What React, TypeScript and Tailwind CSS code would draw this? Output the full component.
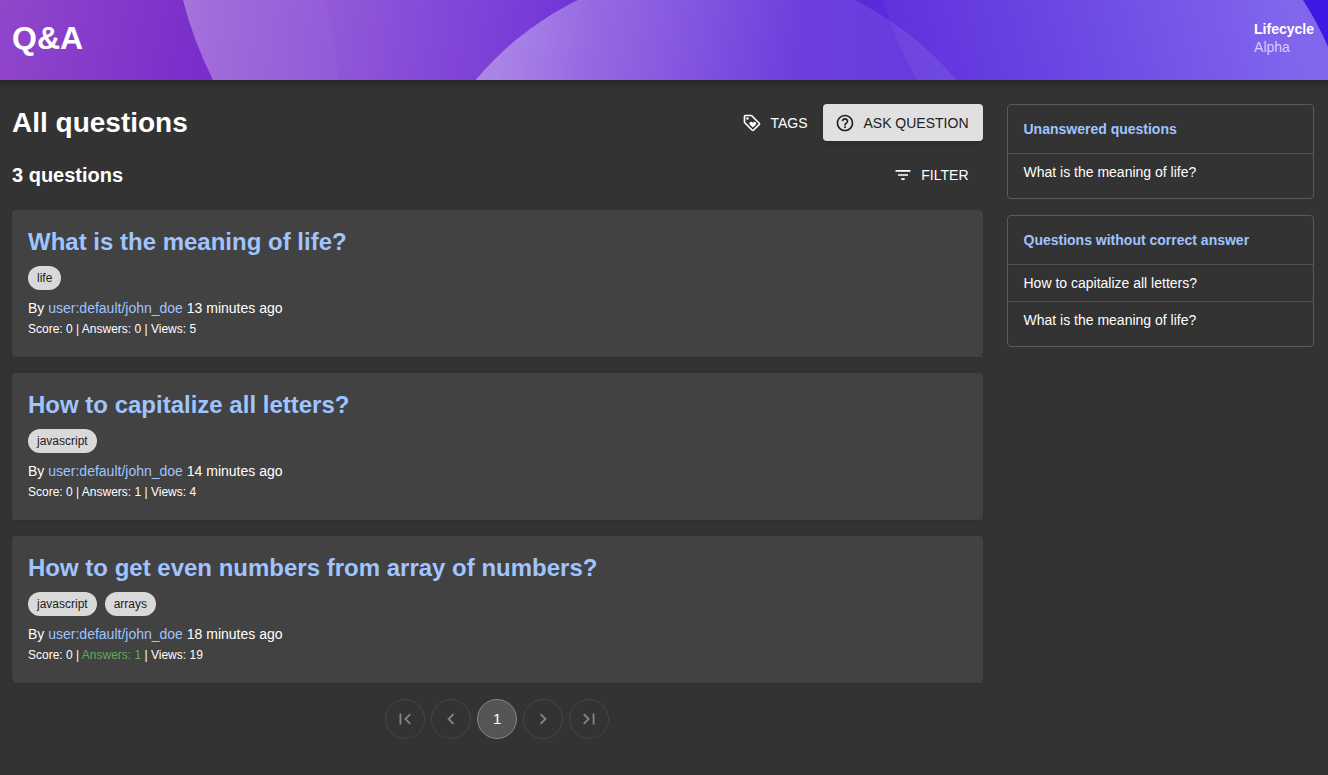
import type { ReactNode } from 'react';
import {
  MdOutlineLoyalty,
  MdHelpOutline,
  MdFilterList,
  MdFirstPage,
  MdNavigateBefore,
  MdNavigateNext,
  MdLastPage,
} from 'react-icons/md';

type Question = {
  title: string;
  tags: string[];
  age: string;
  score: number;
  answers: number;
  views: number;
  solved?: boolean;
};

const questions: Question[] = [
  { title: 'What is the meaning of life?', tags: ['life'], age: '13 minutes ago', score: 0, answers: 0, views: 5 },
  { title: 'How to capitalize all letters?', tags: ['javascript'], age: '14 minutes ago', score: 0, answers: 1, views: 4 },
  {
    title: 'How to get even numbers from array of numbers?',
    tags: ['javascript', 'arrays'],
    age: '18 minutes ago',
    score: 0,
    answers: 1,
    views: 19,
    solved: true,
  },
];

function HeaderShapes() {
  return (
    <svg
      className="absolute inset-0 h-full w-full"
      viewBox="0 0 1328 80"
      preserveAspectRatio="none"
      aria-hidden="true"
    >
      <defs>
        <linearGradient id="base" gradientUnits="userSpaceOnUse" x1="0" y1="0" x2="1328" y2="0">
          <stop offset="0" stopColor="#8737c6" />
          <stop offset="0.16" stopColor="#792dcb" />
          <stop offset="0.4" stopColor="#7132d6" />
          <stop offset="0.66" stopColor="#5a2adb" />
          <stop offset="1" stopColor="#3f17e3" />
        </linearGradient>
        <linearGradient id="fadeA" gradientUnits="userSpaceOnUse" x1="0" y1="0" x2="330" y2="110">
          <stop offset="0" stopColor="#fff" stopOpacity="0.08" />
          <stop offset="0.6" stopColor="#fff" stopOpacity="0" />
          <stop offset="1" stopColor="#fff" stopOpacity="0.02" />
        </linearGradient>
        <linearGradient id="fadeB" gradientUnits="userSpaceOnUse" x1="190" y1="0" x2="590" y2="60">
          <stop offset="0" stopColor="#fff" stopOpacity="0.32" />
          <stop offset="0.6" stopColor="#fff" stopOpacity="0.12" />
          <stop offset="1" stopColor="#fff" stopOpacity="0" />
        </linearGradient>
        <linearGradient id="fadeC" gradientUnits="userSpaceOnUse" x1="490" y1="20" x2="790" y2="80">
          <stop offset="0" stopColor="#fff" stopOpacity="0.37" />
          <stop offset="0.65" stopColor="#fff" stopOpacity="0.19" />
          <stop offset="1" stopColor="#fff" stopOpacity="0.09" />
        </linearGradient>
        <linearGradient id="fadeD" gradientUnits="userSpaceOnUse" x1="900" y1="80" x2="1290" y2="0">
          <stop offset="0" stopColor="#fff" stopOpacity="0.04" />
          <stop offset="1" stopColor="#fff" stopOpacity="0.34" />
        </linearGradient>
      </defs>
      <rect width="1328" height="80" fill="url(#base)" />
      <path d="M0 0H324Q336 36 338 80H0Z" fill="url(#fadeA)" />
      <path d="M183 0Q193 40 213 80H800V0Z" fill="url(#fadeB)" />
      <circle cx="716" cy="282" r="314" fill="url(#fadeC)" />
      <path d="M883 0Q895 42 917 80H1340Q1329 41 1303 0Z" fill="url(#fadeD)" />
    </svg>
  );
}

function QuestionCard({ q }: { q: Question }) {
  return (
    <li className="border-b border-[#484848]">
      <article className="rounded bg-[#424242] px-4 pt-4 pb-[17px] shadow">
        <h3 className="text-2xl leading-8 font-bold text-[#9fc4ff]">
          <a href="#question">{q.title}</a>
        </h3>
        <div className="mt-2 flex gap-2">
          {q.tags.map((tag) => (
            <a
              key={tag}
              href="#tag"
              className="flex h-6 items-center rounded-full bg-[#d9d9d9] px-[9px] text-xs text-[#1c1c1c]"
            >
              {tag}
            </a>
          ))}
        </div>
        <p className="mt-2 text-sm leading-5">
          By{' '}
          <a href="#user" className="text-[#9fc4ff]">
            user:default/john_doe
          </a>{' '}
          {q.age}
        </p>
        <p className="mt-px text-xs leading-5">
          Score: {q.score} |{' '}
          <span className={q.solved ? 'text-[#5fad56]' : ''}>Answers: {q.answers}</span> | Views: {q.views}
        </p>
      </article>
    </li>
  );
}

function SideList({ title, items }: { title: string; items: string[] }) {
  return (
    <section className="rounded border border-[#5a5a5a] pb-2 text-sm">
      <h2 className="flex h-12 items-center px-4 font-bold text-[#9fc4ff]">{title}</h2>
      <ul>
        {items.map((item) => (
          <li key={item} className="border-t border-[#515151] px-4 py-2 leading-5">
            <a href="#question">{item}</a>
          </li>
        ))}
      </ul>
    </section>
  );
}

function PageButton({ label, active, children }: { label: string; active?: boolean; children: ReactNode }) {
  return (
    <button
      type="button"
      aria-label={label}
      disabled={!active}
      className={
        active
          ? 'flex size-10 items-center justify-center rounded-full border border-[#858585] bg-[#555555] text-[15px] text-white'
          : 'flex size-10 items-center justify-center rounded-full border border-[#454545] text-[22px] text-[#858585]'
      }
    >
      {children}
    </button>
  );
}

export default function App() {
  return (
    <div className="min-h-screen bg-[#333333] font-['Helvetica_Neue','Liberation_Sans',sans-serif] text-white">
      <header className="relative h-20 shadow-[0_0_8px_3px_rgba(20,20,20,0.45)]">
        <HeaderShapes />
        <div className="relative flex h-full items-start justify-between pr-[14px] pl-3">
          <h1 className="pt-[18px] text-[32px] leading-10 font-bold">Q&amp;A</h1>
          <dl className="pt-5 text-sm leading-[18px]">
            <dt className="font-bold">Lifecycle</dt>
            <dd className="text-white/70">Alpha</dd>
          </dl>
        </div>
      </header>
      <main className="grid grid-cols-12 items-start gap-6 pt-6 pr-[14px] pb-9 pl-3">
        <div className="col-span-9">
          <div className="flex h-[37px] items-center justify-between">
            <h2 className="text-[28px] leading-9 font-bold">All questions</h2>
            <div className="flex h-full items-center">
              <a href="#tags" className="flex items-center gap-2 px-4 text-sm">
                <MdOutlineLoyalty className="size-5" />
                TAGS
              </a>
              <a
                href="#ask"
                className="flex h-full items-center gap-2 rounded bg-[#e0e0e0] pr-[14px] pl-3 text-sm text-[#212121] shadow-md"
              >
                <MdHelpOutline className="size-5" />
                ASK QUESTION
              </a>
            </div>
          </div>
          <div className="mt-4 flex h-9 items-center justify-between">
            <h3 className="text-xl leading-7 font-bold">3 questions</h3>
            <button type="button" className="flex h-full items-center gap-2 pr-[14px] pl-3 text-sm">
              <MdFilterList className="size-5" />
              FILTER
            </button>
          </div>
          <ul className="mt-4 flex flex-col gap-4 pt-px">
            {questions.map((q) => (
              <QuestionCard key={q.title} q={q} />
            ))}
          </ul>
          <nav aria-label="Pages" className="mt-4 flex justify-center gap-[6px]">
            <PageButton label="First page">
              <MdFirstPage />
            </PageButton>
            <PageButton label="Previous page">
              <MdNavigateBefore />
            </PageButton>
            <PageButton label="Page 1" active>
              1
            </PageButton>
            <PageButton label="Next page">
              <MdNavigateNext />
            </PageButton>
            <PageButton label="Last page">
              <MdLastPage />
            </PageButton>
          </nav>
        </div>
        <aside className="col-span-3 flex flex-col gap-4">
          <SideList title="Unanswered questions" items={['What is the meaning of life?']} />
          <SideList
            title="Questions without correct answer"
            items={['How to capitalize all letters?', 'What is the meaning of life?']}
          />
        </aside>
      </main>
    </div>
  );
}
